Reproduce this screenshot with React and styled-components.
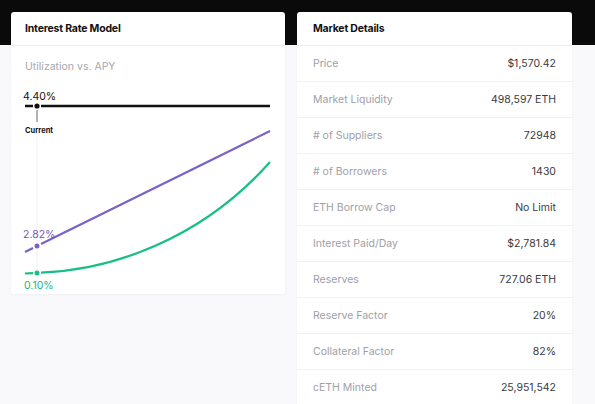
import React from "react";
import styled, { createGlobalStyle } from "styled-components";

const details = [
  ["Price", "$1,570.42"],
  ["Market Liquidity", "498,597 ETH"],
  ["# of Suppliers", "72948"],
  ["# of Borrowers", "1430"],
  ["ETH Borrow Cap", "No Limit"],
  ["Interest Paid/Day", "$2,781.84"],
  ["Reserves", "727.06 ETH"],
  ["Reserve Factor", "20%"],
  ["Collateral Factor", "82%"],
  ["cETH Minted", "25,951,542"],
];

const GlobalStyle = createGlobalStyle`
  html, body {
    margin: 0;
    padding: 0;
    overflow: hidden;
  }
  body {
    font-family: Inter, "Noto Sans", sans-serif;
  }
`;

const Page = styled.div`
  width: 595px;
  height: 404px;
  overflow: hidden;
  display: flex;
  align-items: flex-start;
  gap: 12px;
  padding: 12px 0 0 11px;
  box-sizing: border-box;
  background: linear-gradient(#0a0a0a 0, #0a0a0a 45px, #f9f9fc 45px);
`;

const Card = styled.div`
  width: ${(p) => p.width}px;
  height: ${(p) => p.height}px;
  flex-shrink: 0;
  background: #fff;
  border-radius: 3px;
  box-shadow: 0 1px 3px rgba(0, 0, 0, 0.04);
  display: flex;
  flex-direction: column;
  overflow: hidden;
`;

const Header = styled.div`
  height: 34px;
  flex-shrink: 0;
  display: flex;
  align-items: center;
  padding: 0 ${(p) => p.pad}px;
  border-bottom: 1px solid #efeff1;
  box-sizing: border-box;
  font-size: 10.5px;
  font-weight: 700;
  color: #111;
  letter-spacing: -0.2px;
`;

const Subtitle = styled.div`
  height: 40px;
  flex-shrink: 0;
  display: flex;
  align-items: center;
  padding: 0 14px;
  font-size: 10.5px;
  color: #a8a8ad;
`;

const Chart = styled.svg`
  display: block;
  flex: 1;
  width: 100%;
`;

const ChartLabel = styled.text`
  font-family: Inter, "Noto Sans", sans-serif;
  font-size: ${(p) => p.size || 10.5}px;
  font-weight: ${(p) => p.weight || 400};
  fill: ${(p) => p.color};
`;

const Row = styled.div`
  height: 36px;
  flex-shrink: 0;
  display: flex;
  align-items: center;
  justify-content: space-between;
  padding: 0 16px;
  box-sizing: border-box;
  border-bottom: 1px solid #f1f1f3;
  font-size: 10.5px;
`;

const Label = styled.span`
  color: #a0a0a6;
`;

const Value = styled.span`
  color: #3a3a3e;
`;

function RateChart() {
  return (
    <Chart viewBox="0 6 274 208" preserveAspectRatio="none">
      <line x1="26" y1="45" x2="26" y2="205" stroke="#f3f3f5" strokeWidth="1" />

      <ChartLabel x="12" y="20" color="#111" size={10.5}>4.40%</ChartLabel>
      <line x1="14" y1="26" x2="22" y2="26" stroke="#111" strokeWidth="2.5" />
      <line x1="30" y1="26" x2="259" y2="26" stroke="#111" strokeWidth="2.5" />
      <circle cx="26" cy="26" r="2.6" fill="#111" />
      <line x1="26" y1="30" x2="26" y2="42" stroke="#666" strokeWidth="1" />
      <ChartLabel x="14" y="53" color="#111" size={7.5} weight={700}>Current</ChartLabel>

      <line x1="14" y1="172" x2="22" y2="168" stroke="#7b62c6" strokeWidth="2.2" />
      <line x1="30" y1="164" x2="259" y2="51" stroke="#7b62c6" strokeWidth="2.2" />
      <circle cx="26" cy="166" r="2.5" fill="#7b62c6" />
      <ChartLabel x="12" y="158" color="#6e5bb3">2.82%</ChartLabel>

      <line x1="14" y1="193.5" x2="22" y2="193.2" stroke="#16bf88" strokeWidth="2.2" />
      <path d="M30 192.6 C 100 190, 190 160, 259 82" fill="none" stroke="#16bf88" strokeWidth="2.2" />
      <circle cx="26" cy="193" r="2.5" fill="#16bf88" />
      <ChartLabel x="13" y="209" color="#1bb584">0.10%</ChartLabel>
    </Chart>
  );
}

export default function App() {
  return (
    <Page>
      <GlobalStyle />
      <Card width={274} height={282}>
        <Header pad={14}>Interest Rate Model</Header>
        <Subtitle>Utilization vs. APY</Subtitle>
        <RateChart />
      </Card>
      <Card width={275} height={400}>
        <Header pad={16}>Market Details</Header>
        {details.map(([label, value]) => (
          <Row key={label}>
            <Label>{label}</Label>
            <Value>{value}</Value>
          </Row>
        ))}
      </Card>
    </Page>
  );
}
